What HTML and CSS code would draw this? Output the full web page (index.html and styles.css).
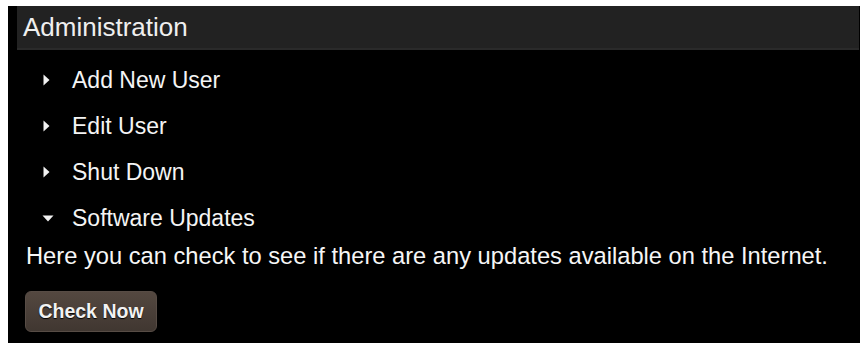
FILE: index.html
```html
<!DOCTYPE html>
<html>
<head>
<meta charset="utf-8">
<link rel="stylesheet" href="styles.css">
</head>
<body>
<div class="panel">
  <div class="header">Administration</div>
  <ul class="menu">
    <li class="item"><svg class="tri" width="7" height="12" viewBox="0 0 7 12"><polygon points="0.5,0.5 6.5,6 0.5,11.5" fill="#f2f2f2"/></svg><span class="label">Add New User</span></li>
    <li class="item"><svg class="tri" width="7" height="12" viewBox="0 0 7 12"><polygon points="0.5,0.5 6.5,6 0.5,11.5" fill="#f2f2f2"/></svg><span class="label">Edit User</span></li>
    <li class="item"><svg class="tri" width="7" height="12" viewBox="0 0 7 12"><polygon points="0.5,0.5 6.5,6 0.5,11.5" fill="#f2f2f2"/></svg><span class="label">Shut Down</span></li>
    <li class="item"><svg class="tri down" width="12" height="7" viewBox="0 0 12 7"><polygon points="0.5,0.5 11.5,0.5 6,6.5" fill="#f2f2f2"/></svg><span class="label">Software Updates</span></li>
  </ul>
  <p class="desc">Here you can check to see if there are any updates available on the Internet.</p>
  <div class="actions"><button class="btn">Check Now</button></div>
</div>
</body>
</html>
```
FILE: styles.css
```css
html, body {
  margin: 0;
  padding: 0;
  background: #ffffff;
  height: 100%;
}
body {
  padding: 6px 5px 0 8px;
  box-sizing: border-box;
  font-family: "Liberation Sans", Arial, sans-serif;
  color: #f4f4f4;
}
.panel {
  background: #000;
  min-height: 100%;
  padding-bottom: 20px;
  box-sizing: border-box;
}
.header {
  margin-left: 9px;
  margin-right: 1px;
  height: 42px;
  line-height: 43px;
  padding-left: 6px;
  font-size: 26px;
  background: #222222;
  border-bottom: 2px solid #2a2a2a;
  color: #efefef;
}
.menu {
  list-style: none;
  margin: 0;
  padding: 7px 0 0 0;
}
.item {
  display: flex;
  align-items: center;
  height: 46px;
  font-size: 23px;
  padding-left: 35px;
}
.tri {
  display: block;
  flex: none;
  margin-right: 22px;
}
.tri.down {
  margin-left: -1px;
  margin-right: 18px;
}
.label {
  line-height: 46px;
}
.desc {
  margin: 1px 0 0 0;
  padding-left: 18px;
  font-size: 23.7px;
  line-height: 28px;
  color: #f6f6f6;
}
.actions {
  padding-left: 17px;
  margin-top: 21px;
}
.btn {
  font-family: "Liberation Sans", Arial, sans-serif;
  font-weight: bold;
  font-size: 19.5px;
  color: #f2f2f2;
  height: 41px;
  width: 132px;
  padding: 0;
  border: 1px solid #574c45;
  border-radius: 6px;
  background: linear-gradient(#544840, #403731);
  text-shadow: 0 1px 1px #000;
  cursor: pointer;
}
```
